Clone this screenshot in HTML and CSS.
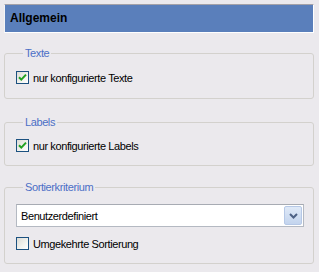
FILE: index.html
```html
<!DOCTYPE html>
<html>
<head>
<meta charset="utf-8">
<link rel="stylesheet" href="styles.css">
</head>
<body>
<div class="panel">
  <div class="header">Allgemein</div>

  <fieldset class="group g1">
    <legend>Texte</legend>
    <label class="check">
      <span class="box checked"><svg viewBox="0 0 11 11" width="11" height="11"><path d="M2 5.2 L4.3 7.6 L9 2.6" fill="none" stroke="#21a121" stroke-width="2"/></svg></span>
      <span>nur konfigurierte Texte</span>
    </label>
  </fieldset>

  <fieldset class="group g2">
    <legend>Labels</legend>
    <label class="check">
      <span class="box checked"><svg viewBox="0 0 11 11" width="11" height="11"><path d="M2 5.2 L4.3 7.6 L9 2.6" fill="none" stroke="#21a121" stroke-width="2"/></svg></span>
      <span>nur konfigurierte Labels</span>
    </label>
  </fieldset>

  <fieldset class="group g3">
    <legend>Sortierkriterium</legend>
    <div class="select">
      <span class="value">Benutzerdefiniert</span>
      <span class="drop"><svg viewBox="0 0 9 6" width="9" height="6"><path d="M1 1 L4.5 4.5 L8 1" fill="none" stroke="#4d6185" stroke-width="2"/></svg></span>
    </div>
    <label class="check">
      <span class="box"></span>
      <span>Umgekehrte Sortierung</span>
    </label>
  </fieldset>
</div>
</body>
</html>
```
FILE: styles.css
```css
html, body {
  margin: 0;
  padding: 0;
  background: #ebe9ed;
}
body {
  font-family: "Liberation Sans", Arial, sans-serif;
  font-size: 11px;
  letter-spacing: -0.4px;
  color: #000;
  width: 319px;
  height: 272px;
  overflow: hidden;
}
.panel {
  padding: 4px 5px 0 4px;
}
.header {
  height: 27px;
  border-top: 1px solid #a3a1a8;
  border-left: 1px solid #f4f4f6;
  border-right: 1px solid #ffffff;
  border-bottom: 1px solid #ffffff;
  background: #5a7fbb;
  font-weight: bold;
  font-size: 12px;
  letter-spacing: 0;
  line-height: 27px;
  padding-left: 5px;
  color: #000;
}
.group {
  margin: 0;
  border: 1px solid #d3d1cd;
  border-radius: 3px;
  padding: 0 9px 0 11px;
  min-width: 0;
}
.group legend {
  color: #4b6fc6;
  font-size: 11px;
  line-height: 13px;
  padding: 0 2px;
  margin-left: 7px;
}
.g1 {
  margin-top: 14px;
  padding-top: 11px;
  padding-bottom: 14px;
}
.g2 {
  margin-top: 17px;
  padding-top: 10px;
  padding-bottom: 13px;
}
.g3 {
  margin-top: 15px;
  padding-top: 10px;
  padding-bottom: 13px;
}
.check {
  display: flex;
  align-items: center;
  height: 13px;
  gap: 4px;
}
.box {
  box-sizing: border-box;
  width: 13px;
  height: 13px;
  border: 1px solid #1c5180;
  background: linear-gradient(135deg, #dcdcd6 0%, #f3f3ef 60%, #ffffff 100%);
  display: flex;
  align-items: center;
  justify-content: center;
}
.box svg {
  display: block;
}
.select {
  box-sizing: border-box;
  height: 23px;
  border: 1px solid #b4b9c2;
  border-top-color: #a7abb3;
  background: #fff;
  display: flex;
  align-items: center;
  justify-content: space-between;
  margin-bottom: 10px;
  padding: 1px;
}
.value {
  padding-left: 3px;
}
.drop {
  box-sizing: border-box;
  width: 18px;
  height: 19px;
  border: 1px solid #b6c8e6;
  border-radius: 2px;
  background: linear-gradient(#dfe9f7, #c3d4ee);
  display: flex;
  align-items: center;
  justify-content: center;
}
```
